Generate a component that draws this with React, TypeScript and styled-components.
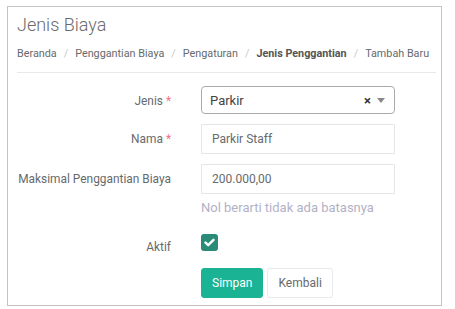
import styled, { createGlobalStyle } from "styled-components";

const GlobalStyle = createGlobalStyle`
  body {
    margin: 0;
    background: #ffffff;
    font-family: Roboto, "Liberation Sans", Arial, sans-serif;
    color: #676a6c;
  }
`;

const crumbs = ["Beranda", "Penggantian Biaya", "Pengaturan"];

const App = () => {
  return (
    <>
      <GlobalStyle />
      <Panel>
        <Title>Jenis Biaya</Title>
        <Breadcrumb>
          {crumbs.map((c) => (
            <Crumb key={c}>
              {c}
              <Sep>/</Sep>
            </Crumb>
          ))}
          <Crumb $active>
            Jenis Penggantian
            <Sep>/</Sep>
          </Crumb>
          <Crumb>Tambah Baru</Crumb>
        </Breadcrumb>
        <Divider />

        <Form>
          <Row>
            <Label>
              Jenis <Req>*</Req>
            </Label>
            <Select>
              <span>Parkir</span>
              <SelectIcons>
                <Clear>×</Clear>
                <Caret />
              </SelectIcons>
            </Select>
          </Row>
          <Row>
            <Label>
              Nama <Req>*</Req>
            </Label>
            <Input defaultValue="Parkir Staff" />
          </Row>
          <Row>
            <Label>Maksimal Penggantian Biaya</Label>
            <Field>
              <Input defaultValue="200.000,00" />
              <Help>Nol berarti tidak ada batasnya</Help>
            </Field>
          </Row>
          <Row $top={17}>
            <Label $offset={-2}>Aktif</Label>
            <Check>
              <svg width="11" height="9" viewBox="0 0 11 9">
                <path
                  d="M1.5 4.6 L4.2 7.2 L9.5 1.8"
                  stroke="#fff"
                  strokeWidth="2.4"
                  fill="none"
                  strokeLinecap="round"
                  strokeLinejoin="round"
                />
              </svg>
            </Check>
          </Row>
          <Row $top={13}>
            <Label />
            <Actions>
              <Button $primary>Simpan</Button>
              <Button>Kembali</Button>
            </Actions>
          </Row>
        </Form>
      </Panel>
    </>
  );
};

export default App;

const Panel = styled.div`
  box-sizing: border-box;
  width: 435px;
  margin: 6px 0 0 7px;
  padding: 7px 5px 7px 9px;
  border: 1px solid #c4c4c4;
`;

const Title = styled.h2`
  margin: 0;
  font-size: 18px;
  line-height: 21px;
  font-weight: 300;
  color: #6b6b6b;
`;

const Breadcrumb = styled.div`
  display: flex;
  margin-top: 11px;
  font-size: 10.8px;
  line-height: 16px;
  white-space: nowrap;
`;

const Crumb = styled.span<{ $active?: boolean }>`
  font-weight: ${(p) => (p.$active ? 700 : 400)};
  color: ${(p) => (p.$active ? "#555" : "#676a6c")};
`;

const Sep = styled.span`
  display: inline-block;
  padding: 0 7px;
  font-weight: 400;
  color: #c8c8c8;
`;

const Divider = styled.div`
  height: 1px;
  margin-top: 10px;
  background: #e7eaec;
`;

const Form = styled.div`
  display: flex;
  flex-direction: column;
  gap: 10px;
  padding-top: 13px;
`;

const Row = styled.div<{ $top?: number }>`
  display: flex;
  align-items: flex-start;
  gap: 30px;
  margin-top: ${(p) => (p.$top ? p.$top - 10 : 0)}px;
`;

const Label = styled.div<{ $offset?: number }>`
  flex: 0 0 154px;
  text-align: right;
  white-space: nowrap;
  font-size: 11.9px;
  line-height: 16px;
  padding-top: ${(p) => 7 + (p.$offset ?? 0)}px;
  color: #676a6c;
`;

const Req = styled.span`
  color: #f27385;
`;

const Field = styled.div`
  display: flex;
  flex-direction: column;
`;

const Select = styled.div`
  box-sizing: border-box;
  width: 194px;
  height: 28px;
  display: flex;
  align-items: center;
  justify-content: space-between;
  padding: 0 9px 0 8px;
  border: 1px solid #aaa;
  border-radius: 4px;
  font-size: 13px;
  color: #444;
`;

const SelectIcons = styled.div`
  display: flex;
  align-items: center;
  gap: 6px;
`;

const Clear = styled.span`
  font-size: 13px;
  font-weight: 700;
  color: #333;
  line-height: 1;
`;

const Caret = styled.span`
  width: 0;
  height: 0;
  border-style: solid;
  border-width: 5px 4px 0 4px;
  border-color: #888 transparent transparent transparent;
`;

const Input = styled.input`
  box-sizing: border-box;
  width: 194px;
  height: 30px;
  padding: 0 10px;
  border: 1px solid #e5e6e7;
  border-radius: 1px;
  font-family: Roboto, "Liberation Sans", Arial, sans-serif;
  font-size: 12px;
  color: #676a6c;
  outline: none;
`;

const Help = styled.div`
  margin-top: 5px;
  font-size: 13px;
  line-height: 18px;
  color: #b3b1c6;
`;

const Check = styled.div`
  width: 17px;
  height: 17px;
  border-radius: 3px;
  background: #2a8b78;
  display: flex;
  align-items: center;
  justify-content: center;
`;

const Actions = styled.div`
  display: flex;
  gap: 4px;
`;

const Button = styled.button<{ $primary?: boolean }>`
  height: 30px;
  padding: 0 10px;
  border-radius: 3px;
  font-family: Roboto, "Liberation Sans", Arial, sans-serif;
  font-size: 12px;
  border: 1px solid ${(p) => (p.$primary ? "#1ab394" : "#e7eaec")};
  background: ${(p) => (p.$primary ? "#1ab394" : "#fff")};
  color: ${(p) => (p.$primary ? "#fff" : "#676a6c")};
`;
